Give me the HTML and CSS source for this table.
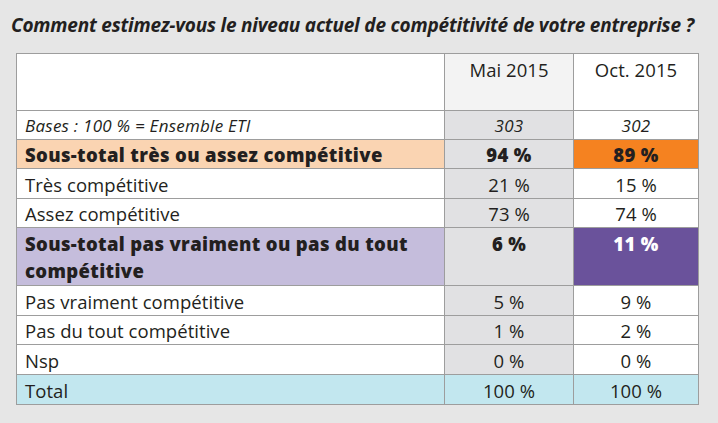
FILE: index.html
```html
<!DOCTYPE html>
<html lang="fr">
<head>
<meta charset="utf-8">
<title>Compétitivité</title>
<link rel="stylesheet" href="styles.css">
</head>
<body>
<div class="page">
  <h1 class="title">Comment estimez-vous le niveau actuel de compétitivité de votre entreprise ?</h1>
  <table class="grid">
    <colgroup>
      <col class="c-label">
      <col class="c-mai">
      <col class="c-oct">
    </colgroup>
    <tr class="head">
      <td></td>
      <td class="num mai-head">Mai 2015</td>
      <td class="num">Oct. 2015</td>
    </tr>
    <tr class="bases">
      <td>Bases : 100 % = Ensemble ETI</td>
      <td class="num mai">303</td>
      <td class="num">302</td>
    </tr>
    <tr class="sub sub-pos">
      <td class="lbl">Sous-total très ou assez compétitive</td>
      <td class="num mai">94 %</td>
      <td class="num hl">89 %</td>
    </tr>
    <tr>
      <td>Très compétitive</td>
      <td class="num mai">21 %</td>
      <td class="num">15 %</td>
    </tr>
    <tr>
      <td>Assez compétitive</td>
      <td class="num mai">73 %</td>
      <td class="num">74 %</td>
    </tr>
    <tr class="sub sub-neg">
      <td class="lbl">Sous-total pas vraiment ou pas du tout compétitive</td>
      <td class="num mai">6 %</td>
      <td class="num hl">11 %</td>
    </tr>
    <tr>
      <td>Pas vraiment compétitive</td>
      <td class="num mai">5 %</td>
      <td class="num">9 %</td>
    </tr>
    <tr>
      <td>Pas du tout compétitive</td>
      <td class="num mai">1 %</td>
      <td class="num">2 %</td>
    </tr>
    <tr>
      <td>Nsp</td>
      <td class="num mai">0 %</td>
      <td class="num">0 %</td>
    </tr>
    <tr class="total">
      <td>Total</td>
      <td class="num">100 %</td>
      <td class="num">100 %</td>
    </tr>
  </table>
</div>
</body>
</html>
```

FILE: styles.css
```css
* { box-sizing: border-box; }
html, body {
  margin: 0;
  padding: 0;
  background: #e6e6e6;
}
body {
  font-family: "Open Sans", "Noto Sans", sans-serif;
  color: #231f20;
  width: 718px;
  height: 423px;
  overflow: hidden;
}
.page {
  padding: 12px 0 0 11px;
}
.title {
  margin: 0;
  font-size: 19px;
  font-weight: 700;
  font-style: italic;
  line-height: 26px;
  letter-spacing: -0.2px;
  white-space: nowrap;
}
.grid {
  margin: 15px 0 0 5px;
  border-collapse: collapse;
  table-layout: fixed;
  width: 682px;
  font-size: 18.5px;
  letter-spacing: 0.05px;
  background: #fff;
}
.c-label { width: 428px; }
.c-mai { width: 129px; }
.c-oct { width: 125px; }
.grid td {
  border: 1px solid #9d9d9d;
  padding: 1.5px 8px 0;
  line-height: 27px;
  height: 28.5px;
  vertical-align: top;
}
.grid .num { text-align: center; }
.grid .mai { background: #e1e1e3; }
.grid .head td { height: 57px; padding-top: 2px; }
.grid .mai-head { background: #f3f3f3; }
.grid .bases td {
  font-style: italic;
  font-size: 17px;
  letter-spacing: 0.25px;
  height: 27px;
  padding-top: 0.5px;
}
.sub td {
  font-weight: 800;
  letter-spacing: 0.35px;
}
.sub-pos .lbl { background: #fad4b2; }
.sub-pos .hl { background: #f58220; }
.grid .sub-neg td { height: 58px; }
.sub-neg .lbl { background: #c5bddc; }
.sub-neg .hl { background: #6a529b; color: #fff; }
.grid .total td { background: #c2e7ef; height: 29.5px; padding-top: 2px; }
```
